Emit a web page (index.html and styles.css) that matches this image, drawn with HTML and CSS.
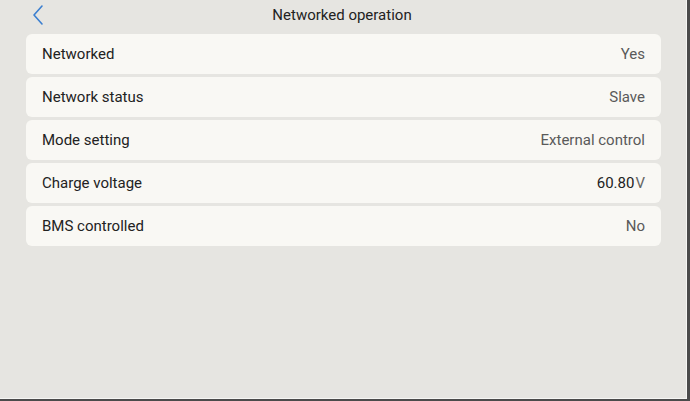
FILE: index.html
```html
<!DOCTYPE html>
<html>
<head>
<meta charset="utf-8">
<link rel="stylesheet" href="styles.css">
</head>
<body>
<div class="screen">
  <header class="topbar">
    <span class="back">
      <svg width="14" height="22" viewBox="0 0 14 22"><path d="M11 2 L3 11 L11 20" fill="none" stroke="#3b7fd0" stroke-width="1.6" stroke-linecap="round" stroke-linejoin="round"/></svg>
    </span>
    <h1 class="title">Networked operation</h1>
  </header>
  <div class="list">
    <div class="row"><span class="label">Networked</span><span class="value">Yes</span></div>
    <div class="row"><span class="label">Network status</span><span class="value">Slave</span></div>
    <div class="row"><span class="label">Mode setting</span><span class="value">External control</span></div>
    <div class="row"><span class="label">Charge voltage</span><span class="value"><span class="num">60.80</span><span class="unit">V</span></span></div>
    <div class="row"><span class="label">BMS controlled</span><span class="value">No</span></div>
  </div>
</div>
</body>
</html>
```
FILE: styles.css
```css
html, body {
  margin: 0;
  padding: 0;
  width: 690px;
  height: 401px;
  overflow: hidden;
  background: #4b4b4b;
  font-family: Roboto, "Noto Sans", sans-serif;
}
.screen {
  width: 686px;
  height: 398px;
  background: #e6e5e1;
  border-right: 1px solid #f6f6f4;
  border-bottom: 1px solid #f6f6f4;
  box-sizing: content-box;
}
.topbar {
  position: relative;
  height: 30px;
  display: flex;
  align-items: center;
  justify-content: center;
}
.back {
  position: absolute;
  left: 31px;
  top: 4px;
  display: flex;
}
.title {
  margin: 0;
  font-size: 15px;
  font-weight: 400;
  color: #222;
  padding-top: 0px;
  margin-left: -2px;
}
.list {
  display: flex;
  flex-direction: column;
  gap: 3px;
  margin: 4px 0 0 26px;
  width: 635px;
}
.row {
  height: 40px;
  background: #f9f8f4;
  border-radius: 6px;
  display: flex;
  align-items: center;
  justify-content: space-between;
  padding: 0 16px;
  font-size: 15px;
}
.label {
  color: #222;
}
.value {
  color: #5a5a5a;
}
.num {
  color: #222;
}
.unit {
  color: #666;
  margin-left: 1px;
}
```
